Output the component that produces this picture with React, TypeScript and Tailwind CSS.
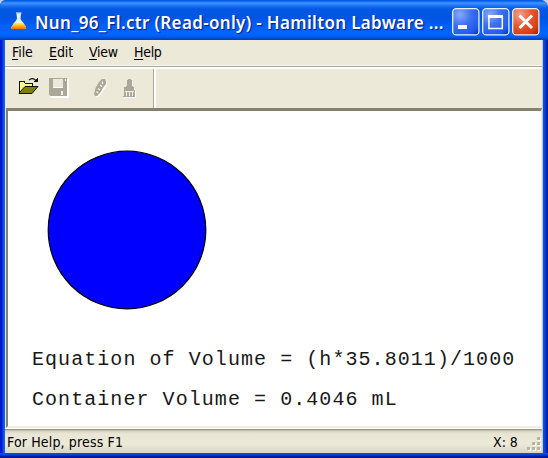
import React from "react";

const uiFont = "font-['DejaVu_Sans_Condensed','DejaVu_Sans',sans-serif] [font-stretch:condensed]";

function FlaskIcon() {
  return (
    <svg width="18" height="20" viewBox="0 0 18 20" className="block">
      <defs>
        <linearGradient id="liquid" x1="0" y1="0" x2="0" y2="1">
          <stop offset="0" stopColor="#fff3a0" />
          <stop offset=".45" stopColor="#ffc21c" />
          <stop offset="1" stopColor="#f06c00" />
        </linearGradient>
      </defs>
      <path d="M6.5 2.5H11L10.5 8L16 16Q16.5 18 14 18H3Q.8 18 1.5 16L7 8Z" fill="#dff6fb" />
      <path d="M4.2 11.5H13L16 16Q16.5 18 14 18H3Q.8 18 1.5 16Z" fill="url(#liquid)" />
      <path d="M6 2h5.5" stroke="#fff" strokeWidth="1.2" />
      <path d="M2 18.5h13" stroke="#9c4b1c" />
    </svg>
  );
}

function OpenIcon() {
  return (
    <svg width="21" height="18" viewBox="0 0 21 18" shapeRendering="crispEdges" className="block">
      <path d="M1 16V5L2 4H6L7 6H14V9" fill="#ffff9a" stroke="#111" />
      <path d="M2 6h4M3 8h10M2 10h5M3 12h3" stroke="#f5ef35" strokeDasharray="1 1" />
      <path d="M1 16L7 9.5H20L14 16.5H1Z" fill="#808000" stroke="#111" shapeRendering="auto" />
      <path d="M11 3.2Q13.5.5 16.5 2.2L18 4" fill="none" stroke="#111" strokeWidth="1.2" shapeRendering="auto" />
      <path d="M19.5 1v4h-4z" fill="#111" />
    </svg>
  );
}

function SaveIcon() {
  return (
    <svg width="20" height="20" viewBox="0 0 20 20" shapeRendering="crispEdges" className="block">
      <path d="M1 1H20V20H2V19H1Z" fill="#fff" />
      <path d="M0 0H18V18H1L0 17Z" fill="#aca899" />
      <path d="M4 1H14V9H4Z" fill="#ece9d8" />
      <path d="M16 1h1v2h-1zM12 13h2v4h-2z" fill="#f5f3e8" />
      <path d="M4 9H14" stroke="#fff" />
    </svg>
  );
}

function PencilIcon() {
  const body = "M5 3L8 0H11L12 2V5L9 9L6 14L3 17H1L0 15L1.5 9Z";
  return (
    <svg width="14" height="20" viewBox="0 0 14 20" className="block">
      <path d={body} transform="translate(1.3 1.3)" fill="#fff" />
      <path d={body} fill="#aca899" />
      <path d="M8.5 2.5V5M6 6L8 7.5M4 9.5L6 11M2.5 12.5L4 14" fill="none" stroke="#f6f3e8" strokeWidth="1.3" />
    </svg>
  );
}

function BrushIcon() {
  const body = "M4 2L5 0H8L9 2V7L11 8V11H12V18H0V17H1V8L4 7Z";
  return (
    <svg width="14" height="20" viewBox="0 0 14 20" shapeRendering="crispEdges" className="block">
      <path d={body} transform="translate(1 1)" fill="#fff" />
      <path d={body} fill="#aca899" />
      <path d="M2 12.5H11M3.5 13V17M6.5 13V17M9.5 13V17" stroke="#f3f0e3" />
    </svg>
  );
}

function CaptionButton({ kind }: { kind: "min" | "max" | "close" }) {
  const close = kind === "close";
  return (
    <svg width="28" height="28" viewBox="0 0 28 28" className="block shrink-0">
      <defs>
        <radialGradient id={"cap" + kind} cx=".28" cy=".22" r=".95">
          <stop offset="0" stopColor={close ? "#f0a08a" : "#86a9fb"} />
          <stop offset=".45" stopColor={close ? "#e35a36" : "#3c70ee"} />
          <stop offset=".85" stopColor={close ? "#d63b0c" : "#1f5af0"} />
          <stop offset="1" stopColor={close ? "#a82b08" : "#0b3fbd"} />
        </radialGradient>
      </defs>
      <rect x=".7" y=".7" width="26.2" height="26.2" rx="3.5" fill={`url(#cap${kind})`} stroke="#e9f0ff" strokeWidth="1.3" />
      {kind === "min" && <path d="M6 19h9" stroke="#fff" strokeWidth="4" />}
      {kind === "max" && (
        <g stroke="#fff" fill="none">
          <path d="M6.9 8V20.5H20.3V8" strokeWidth="1.5" />
          <path d="M6 8.5H21" strokeWidth="3" />
        </g>
      )}
      {close && <path d="M7.5 7.5L20 20M20 7.5L7.5 20" stroke="#fff" strokeWidth="3" />}
    </svg>
  );
}

const menus = [
  { label: "File", cell: "w-[37px]", text: "tracking-[-0.05px]" },
  { label: "Edit", cell: "w-[40px]", text: "tracking-[-0.05px]" },
  { label: "View", cell: "w-[45px]", text: "tracking-[-0.3px]" },
  { label: "Help", cell: "w-[40px]", text: "tracking-[-0.3px]" },
];

function Grip() {
  const dots = [[10, 0], [5, 5], [10, 5], [0, 10], [5, 10], [10, 10]];
  return (
    <svg width="14" height="14" viewBox="0 0 14 14" shapeRendering="crispEdges" className="block">
      {dots.map(([x, y]) => (
        <g key={`${x}-${y}`}>
          <rect x={x + 1} y={y + 1} width="3" height="3" fill="#fff" />
          <rect x={x} y={y} width="3" height="3" fill="#b8b4a3" />
        </g>
      ))}
    </svg>
  );
}

export default function App() {
  return (
    <div className="h-[458px] w-[548px] overflow-hidden bg-[#c3cbe6]">
      <div className="flex h-full flex-col overflow-hidden rounded-tl-[6px] rounded-tr-[8px] bg-[linear-gradient(90deg,#0019cf_0,#0019cf_2px,#0850e8_3px,#1660f0_5px,#0855e8_543px,#0842dd_545px,#00138c_548px)]">
        <header className="flex h-10 shrink-0 items-start bg-[linear-gradient(180deg,#0058e6_0,#0a5fea_1px,#3f95ff_3px,#1a70f2_6px,#0358e3_9px,#0054e3_17px,#0060f8_27px,#0066ff_34px,#005bea_37px,#0042c8_39px,#0b3fb8_40px)] pl-[10px]">
          <div className="mt-[11px]">
            <FlaskIcon />
          </div>
          <h1 className="ml-[7px] mt-[11px] w-[417px] shrink-0 whitespace-pre font-['Noto_Sans','Open_Sans',sans-serif] text-[17px] font-semibold leading-[24px] tracking-[0.33px] text-white [text-shadow:1px_1px_1px_#0a1883]">
            Nun_96_Fl.ctr (Read-only) - Hamilton Labware ...
          </h1>
          <div className="mt-2 flex shrink-0 gap-[2px]">
            <CaptionButton kind="min" />
            <CaptionButton kind="max" />
            <CaptionButton kind="close" />
          </div>
        </header>
        <div className="ml-[5px] mr-[5px] flex min-h-0 flex-1 flex-col border-r border-[#bcc6df] bg-[#ece9d8]">
          <nav className={`flex h-[25px] shrink-0 pl-[7px] text-[14px] leading-[24px] text-black ${uiFont}`}>
            {menus.map((m) => (
              <div key={m.label} className={m.cell}>
                <span className={`block whitespace-nowrap ${m.text}`}>
                  <span className="underline decoration-1 underline-offset-2">{m.label[0]}</span>
                  {m.label.slice(1)}
                </span>
              </div>
            ))}
          </nav>
          <div className="h-px shrink-0 bg-[#f8f7ef]" />
          <div className="h-px shrink-0 bg-[#aca899]" />
          <div className="h-[2px] shrink-0 bg-[#fdfdfb]" />
          <div className="flex h-[39px] shrink-0 items-start">
            <div className="ml-[13px] mt-[8px]"><OpenIcon /></div>
            <div className="ml-[10px] mt-[9px]"><SaveIcon /></div>
            <div className="ml-[25px] mt-[10px]"><PencilIcon /></div>
            <div className="ml-[15px] mt-[10px]"><BrushIcon /></div>
            <div className="ml-[16px] h-full w-[3px] border-l border-[#aca899] bg-white" />
          </div>
          <main className="ml-px flex min-h-0 flex-1 flex-col border-b-2 border-l-2 border-r border-t-[3px] border-b-[#f1efe2] border-l-[#85816f] border-r-[#f1efe2] border-t-[#85836f] bg-white">
            <svg width="160" height="160" viewBox="0 0 160 160" className="ml-[39px] mt-[39px] block shrink-0">
              <circle cx="80" cy="80" r="78.8" fill="#00f" stroke="#000" strokeWidth="1.2" />
            </svg>
            <div className="ml-[24px] mt-[30px] whitespace-pre font-['Liberation_Mono',monospace] text-[20px] leading-[40px] tracking-[1.06px] text-[#181818]">
              <p>Equation of Volume = (h*35.8011)/1000</p>
              <p>Container Volume = 0.4046 mL</p>
            </div>
          </main>
          <footer className={`flex h-[25px] shrink-0 justify-between border-t border-white bg-[linear-gradient(180deg,#8e8b7c_0,#aaa796_1px,#d8d4c2_2px,#e9e6d5_5px,#ece9d8_15px,#d8d5c2_24px)] pl-[2px] text-[14px] leading-[27px] text-black ${uiFont}`}>
            <span className="tracking-[0.15px]">For Help, press F1</span>
            <div className="flex">
              <span className="w-[34px] tracking-[0px]">X: 8</span>
              <div className="mr-[1px] mt-[8px]"><Grip /></div>
            </div>
          </footer>
        </div>
        <div className="h-[5px] shrink-0 bg-[linear-gradient(180deg,#0a50e6_0,#0540dc_2px,#0020b4_3px,#00138c_5px)]" />
      </div>
    </div>
  );
}
